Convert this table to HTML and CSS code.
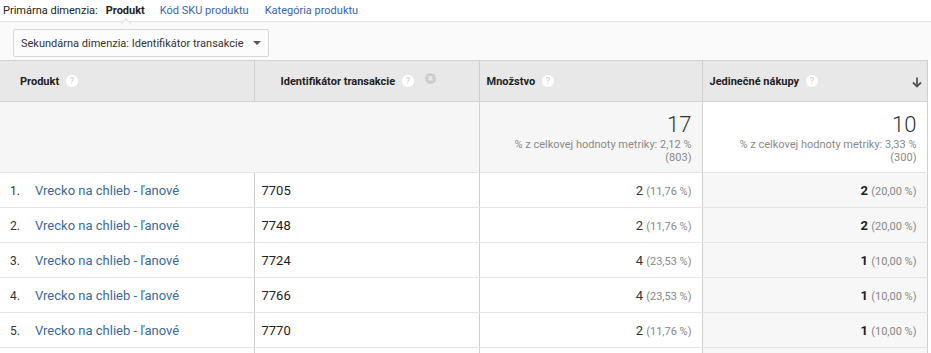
FILE: index.html
```html
<!DOCTYPE html>
<html lang="sk">
<head>
<meta charset="utf-8">
<link rel="stylesheet" href="styles.css">
</head>
<body>
<div class="nav">
  <span class="nav-label">Primárna dimenzia:</span>
  <span class="nav-item active">Produkt<span class="caret"></span></span>
  <a class="nav-item link">Kód SKU produktu</a>
  <a class="nav-item link">Kategória produktu</a>
</div>
<div class="toolbar">
  <div class="dropdown">Sekundárna dimenzia: Identifikátor transakcie<span class="tri"></span></div>
</div>
<table class="report">
  <colgroup>
    <col class="c1"><col class="c2"><col class="c3"><col class="c4">
  </colgroup>
  <thead>
    <tr>
      <th class="h1">Produkt <span class="help">?</span></th>
      <th class="h2">Identifikátor transakcie <span class="help">?</span><span class="remove">×</span></th>
      <th class="h3">Množstvo <span class="help">?</span></th>
      <th class="h4"><span>Jedinečné nákupy <span class="help">?</span></span>
        <svg class="sort" width="10" height="11" viewBox="0 0 10 11"><path d="M5 0.5v9M1 5.5l4 4 4-4" stroke="#555" stroke-width="1.8" fill="none"/></svg>
      </th>
    </tr>
  </thead>
  <tbody>
    <tr class="summary">
      <td colspan="2" class="sum-blank"></td>
      <td class="sum grey"><div class="big">17</div><div class="sub">% z celkovej hodnoty metriky: 2,12 %<br>(803)</div></td>
      <td class="sum"><div class="big">10</div><div class="sub">% z celkovej hodnoty metriky: 3,33 %<br>(300)</div></td>
    </tr>
    <tr><td class="prod"><span class="idx">1.</span><a class="plink">Vrecko na chlieb - ľanové</a></td><td class="tid">7705</td><td class="num">2 <span class="pct">(11,76 %)</span></td><td class="num sorted"><b>2</b> <span class="pct">(20,00 %)</span></td></tr>
    <tr><td class="prod"><span class="idx">2.</span><a class="plink">Vrecko na chlieb - ľanové</a></td><td class="tid">7748</td><td class="num">2 <span class="pct">(11,76 %)</span></td><td class="num sorted"><b>2</b> <span class="pct">(20,00 %)</span></td></tr>
    <tr><td class="prod"><span class="idx">3.</span><a class="plink">Vrecko na chlieb - ľanové</a></td><td class="tid">7724</td><td class="num">4 <span class="pct">(23,53 %)</span></td><td class="num sorted"><b>1</b> <span class="pct">(10,00 %)</span></td></tr>
    <tr><td class="prod"><span class="idx">4.</span><a class="plink">Vrecko na chlieb - ľanové</a></td><td class="tid">7766</td><td class="num">4 <span class="pct">(23,53 %)</span></td><td class="num sorted"><b>1</b> <span class="pct">(10,00 %)</span></td></tr>
    <tr><td class="prod"><span class="idx">5.</span><a class="plink">Vrecko na chlieb - ľanové</a></td><td class="tid">7770</td><td class="num">2 <span class="pct">(11,76 %)</span></td><td class="num sorted"><b>1</b> <span class="pct">(10,00 %)</span></td></tr>
    <tr class="last"><td></td><td></td><td></td><td class="sorted"></td></tr>
  </tbody>
</table>
</body>
</html>
```
FILE: styles.css
```css
html, body {
  margin: 0;
  padding: 0;
  background: #fff;
  font-family: Roboto, "Liberation Sans", Arial, sans-serif;
  color: #222;
  overflow: hidden;
}
.nav {
  display: flex;
  align-items: center;
  padding-left: 3px;
  padding-bottom: 1px;
  box-sizing: border-box;
  height: 22px;
  font-size: 11px;
  border-bottom: 1px solid #e2e2e2;
  background: #fff;
}
.nav-label { color: #222; margin-right: 8px; }
.nav-item { position: relative; margin-right: 16px; }
.nav-item.active { font-weight: bold; color: #222; margin-right: 15px; }
.link { color: #3b64a8; }
.caret {
  position: absolute;
  left: 16px;
  top: 16px;
  width: 7px;
  height: 7px;
  background: #fafafa;
  border-left: 1px solid #e2e2e2;
  border-top: 1px solid #e2e2e2;
  transform: rotate(45deg);
}
.toolbar {
  background: #fafafa;
  padding: 7px 0 0 13px;
  height: 31px;
}
.dropdown {
  display: inline-flex;
  align-items: center;
  box-sizing: border-box;
  width: 256px;
  height: 28px;
  padding-left: 7px;
  border: 1px solid #d6d6d6;
  border-radius: 2px;
  background: #fcfcfc;
  font-size: 11px;
  color: #333;
  white-space: nowrap;
}
.tri {
  margin-left: 9px;
  width: 0;
  height: 0;
  border-left: 4px solid transparent;
  border-right: 4px solid transparent;
  border-top: 4px solid #555;
}
.report {
  border-collapse: collapse;
  table-layout: fixed;
  width: 927px;
  font-size: 12px;
}
.c1 { width: 254px; }
.c2 { width: 225px; }
.c3 { width: 223px; }
.c4 { width: 225px; }
.report th {
  background: #e8e8e8;
  height: 40px;
  padding: 0;
  text-align: left;
  font-size: 11px;
  font-weight: bold;
  color: #222;
  border-top: 1px solid #d4d4d4;
  border-bottom: 1px solid #d4d4d4;
  border-right: 1px solid #cfcfcf;
}
.report th.h1 { padding-left: 20px; }
.report th.h2 { padding-left: 26px; }
.report th.h3 { padding-left: 7px; }
.report th.h4 { padding-left: 7px; padding-right: 5px; }
.h4 > span { display: inline-block; }
.sort { float: right; margin-top: 2px; }
.help {
  display: inline-block;
  vertical-align: middle;
  margin-left: 4px;
  margin-top: -2px;
  width: 12px;
  height: 12px;
  line-height: 12px;
  border-radius: 50%;
  background: #fff;
  color: #c4c4c4;
  font-size: 9px;
  font-weight: normal;
  text-align: center;
}
.remove {
  display: inline-block;
  vertical-align: middle;
  margin-left: 11px;
  margin-top: -6px;
  width: 11px;
  height: 11px;
  line-height: 11px;
  border-radius: 50%;
  background: #cdcdcd;
  color: #eee;
  font-size: 10px;
  font-weight: bold;
  text-align: center;
}
.report td {
  padding: 0;
  height: 34px;
  border-bottom: 1px solid #e4e4e4;
  border-right: 1px solid #cfcfcf;
  vertical-align: middle;
}
.summary td { height: 70px; background: #f6f6f6; }
.summary td.sum {
  background: #fff;
  text-align: right;
  padding-right: 10px;
  vertical-align: top;
  padding-top: 11px;
  height: 59px;
}
.summary td.sum.grey { background: #f6f6f6; }
.big { font-size: 22px; font-weight: 300; color: #333; line-height: 24px; }
.sub { font-size: 11px; color: #8a8a8a; line-height: 13px; margin-top: 1px; }
.prod { padding-left: 10px !important; }
.idx { display: inline-block; width: 25px; color: #333; font-size: 12px; }
.plink { color: #3c6a97; font-size: 13px; }
.tid { padding-left: 7px !important; color: #222; font-size: 13px; }
.num { text-align: right; padding-right: 10px !important; font-size: 13px; color: #333; }
.num b { font-weight: bold; color: #222; }
.pct { font-size: 11px; color: #888; }
.sorted { background: #f7f7f7; }
.report tr.last td { height: 10px; border-bottom: none; }
```
